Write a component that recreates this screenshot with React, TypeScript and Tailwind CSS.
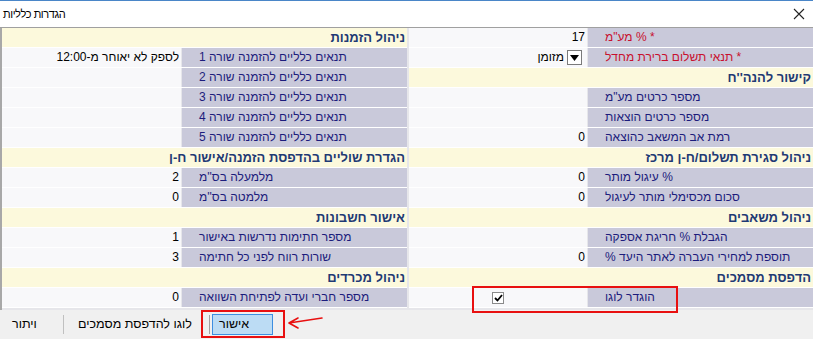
import React from 'react';

type Row =
  | { kind: 'header'; text: string }
  | { kind: 'field'; label: string; value?: React.ReactNode; required?: boolean };

const rightRows: Row[] = [
  { kind: 'field', label: '* % מע"מ', value: '17', required: true },
  { kind: 'field', label: '* תנאי תשלום ברירת מחדל', value: 'select', required: true },
  { kind: 'header', text: "קישור להנה''ח" },
  { kind: 'field', label: 'מספר כרטים מע"מ' },
  { kind: 'field', label: 'מספר כרטים הוצאות' },
  { kind: 'field', label: 'רמת אב המשאב כהוצאה', value: '0' },
  { kind: 'header', text: 'ניהול סגירת תשלום/ח-ן מרכז' },
  { kind: 'field', label: '% עיגול מותר', value: '0' },
  { kind: 'field', label: 'סכום מכסימלי מותר לעיגול', value: '0' },
  { kind: 'header', text: 'ניהול משאבים' },
  { kind: 'field', label: 'הגבלת % חריגת אספקה' },
  { kind: 'field', label: 'תוספת למחירי העברה לאתר היעד %', value: '0' },
  { kind: 'header', text: 'הדפסת מסמכים' },
  { kind: 'field', label: 'הוגדר לוגו', value: 'check' },
];

const leftRows: Row[] = [
  { kind: 'header', text: 'ניהול הזמנות' },
  { kind: 'field', label: 'תנאים כלליים להזמנה שורה 1', value: 'לספק לא יאוחר מ-12:00' },
  { kind: 'field', label: 'תנאים כלליים להזמנה שורה 2' },
  { kind: 'field', label: 'תנאים כלליים להזמנה שורה 3' },
  { kind: 'field', label: 'תנאים כלליים להזמנה שורה 4' },
  { kind: 'field', label: 'תנאים כלליים להזמנה שורה 5' },
  { kind: 'header', text: 'הגדרת שוליים בהדפסת הזמנה/אישור ח-ן' },
  { kind: 'field', label: "מלמעלה בס''מ", value: '2' },
  { kind: 'field', label: "מלמטה בס''מ", value: '0' },
  { kind: 'header', text: 'אישור חשבונות' },
  { kind: 'field', label: 'מספר חתימות נדרשות באישור', value: '1' },
  { kind: 'field', label: 'שורות רווח לפני כל חתימה', value: '3' },
  { kind: 'header', text: 'ניהול מכרדים' },
  { kind: 'field', label: 'מספר חברי ועדה לפתיחת השוואה', value: '0' },
];

const SelectValue = () => (
  <div className="flex items-center h-full pr-[3px] gap-[3px]">
    <span className="w-[15px] h-[15px] border border-[#7a7a7a] bg-white flex items-center justify-center">
      <svg width="9" height="6" viewBox="0 0 9 6">
        <path d="M0 0h9L4.5 6z" fill="#000" />
      </svg>
    </span>
    <span>מזומן</span>
  </div>
);

const CheckValue = () => (
  <div className="flex items-center h-full pr-[81px]">
    <span className="w-[12px] h-[12px] border border-[#8a8a8a] bg-white flex items-center justify-center">
      <svg width="9" height="8" viewBox="0 0 9 8">
        <path d="M1 4l2.5 2.5L8 1" stroke="#000" strokeWidth="1.8" fill="none" />
      </svg>
    </span>
  </div>
);

function Column({ rows, valueWidth }: { rows: Row[]; valueWidth: string }) {
  return (
    <div className="flex flex-col">
      {rows.map((row, i) =>
        row.kind === 'header' ? (
          <div
            key={i}
            className="h-[20px] border-b border-white bg-[#fcf9dc] text-right pr-[2px] font-bold text-[13px] leading-[19px] text-[#1f3a74] whitespace-nowrap overflow-hidden"
          >
            {row.text}
          </div>
        ) : (
          <div key={i} className="h-[20px] border-b border-white flex gap-px">
            <div
              className={`w-[225px] shrink-0 bg-[#c9c9da] text-left pl-[17px] text-[12px] leading-[19px] whitespace-nowrap ${
                row.required ? 'text-[#c8102e]' : 'text-[#1c1c7c]'
              }`}
            >
              {row.label}
            </div>
            <div className={`${valueWidth} bg-[#f8f8fa] text-[12px] leading-[19px] text-black pr-[2px] whitespace-nowrap`}>
              {row.value === 'select' ? <SelectValue /> : row.value === 'check' ? <CheckValue /> : row.value}
            </div>
          </div>
        )
      )}
    </div>
  );
}

export default function App() {
  return (
    <div
      className="relative w-[813px] h-[339px] bg-white overflow-hidden"
      style={{ fontFamily: '"Liberation Sans", Arial, sans-serif' }}
    >
      {/* title bar */}
      <div className="h-[28px] border-t border-[#4a86c8] border-b border-b-[#a0a0a0] flex items-center justify-between px-[3px]">
        <span dir="rtl" className="text-[11px] tracking-[-0.4px] text-black">הגדרות כלליות</span>
        <svg width="12" height="12" viewBox="0 0 12 12" className="mr-[5px]">
          <path d="M1 1l10 10M11 1L1 11" stroke="#222" strokeWidth="1.1" />
        </svg>
      </div>

      {/* content */}
      <div dir="rtl" className="grid grid-cols-[404px_405px] gap-x-[2px] bg-[#e6e6ea] border-l-2 border-[#a8a8a8] h-[282px]">
        <Column rows={rightRows} valueWidth="w-[178px]" />
        <Column rows={leftRows} valueWidth="w-[179px]" />
      </div>

      {/* bottom bar */}
      <div className="h-[29px] bg-[#f0f0f0] flex items-center text-[12.5px] text-black">
        <span dir="rtl" className="w-[63px] pl-[12px] text-left">ויתור</span>
        <span className="w-px h-[19px] bg-[#c0c0c0]" />
        <span dir="rtl" className="w-[145px] pl-[14px] text-left whitespace-nowrap">לוגו להדפסת מסמכים</span>
        <span className="w-px h-[19px] bg-[#a0a0a0]" />
        <span className="ml-[2px] w-[61px] h-[21px] bg-[#bcdcf4] border border-[#3d8ee0] flex items-center pl-[6px]">
          <span dir="rtl">אישור</span>
        </span>
      </div>

      {/* annotations */}
      <div className="absolute left-[472px] top-[286px] w-[206px] h-[27px] border-2 border-[#e81010]" />
      <div className="absolute left-[201px] top-[310px] w-[84px] h-[28px] border-2 border-[#e81010]" />
      <svg className="absolute left-[286px] top-[312px]" width="40" height="20" viewBox="0 0 40 20">
        <path d="M36 6L3 11M3 11L12 6M3 11L12 16" stroke="#e81010" strokeWidth="1.6" fill="none" strokeLinecap="round" />
      </svg>
    </div>
  );
}
